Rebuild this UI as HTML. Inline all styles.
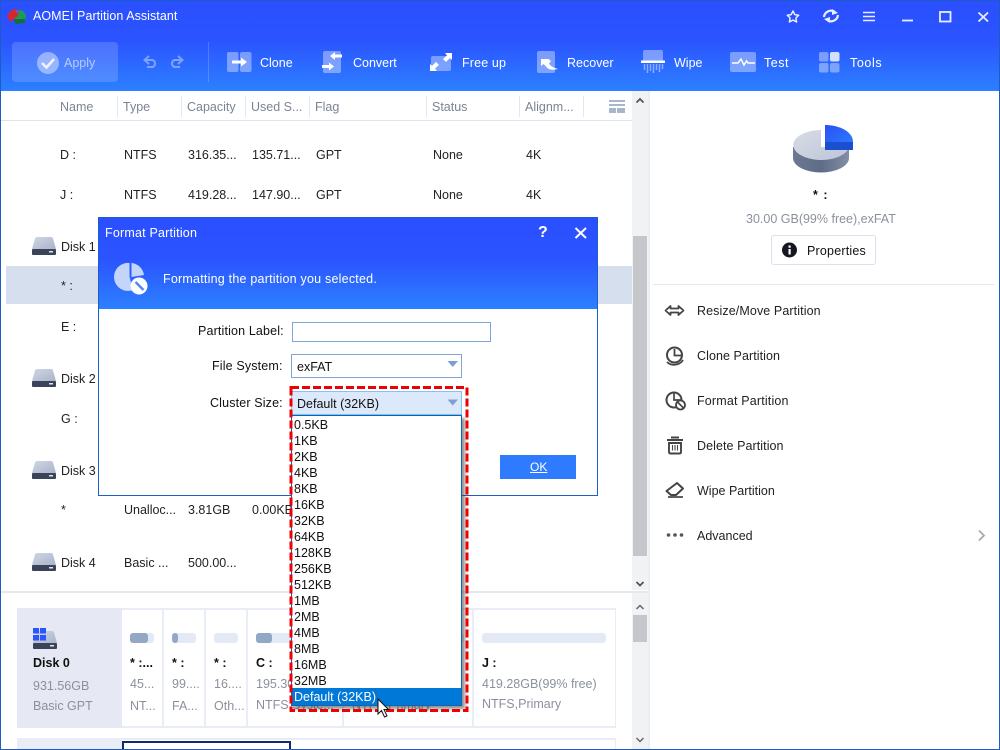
<!DOCTYPE html>
<html><head><meta charset="utf-8"><style>
html,body{margin:0;padding:0;width:1000px;height:750px;overflow:hidden;background:#fff}
body{position:relative;font-family:"Liberation Sans",sans-serif;font-size:12.5px;color:#222}
.t{position:absolute;line-height:16px;height:16px;white-space:nowrap}
.b{position:absolute}
.w{color:#fff}
.h{color:#7b8494}
.g{color:#8b919c}
.k{font-weight:bold;color:#111}
svg{position:absolute;left:0;top:0}
.dd{position:absolute;left:291px;top:415px;width:169px;height:289px;background:#fff;border:1px solid #0a66b4;box-shadow:3px 3px 3px rgba(60,60,60,.55)}
.dd div{height:16px;line-height:18px;padding-left:2px;color:#111}
.dd .s{background:#0078d7;color:#fff;height:17px}
</style></head><body>
<div class="b" style="left:0;top:0;width:1000px;height:91px;background:linear-gradient(#2b4fff 0%,#2b54ff 45%,#2c80ff 100%)"></div>
<div class="b" style="left:0;top:0;width:1000px;height:1px;background:#1c5cc4"></div>
<div class="b" style="left:12px;top:42px;width:106px;height:40px;border-radius:4px;background:rgba(255,255,255,.16)"></div>
<div class="b" style="left:208px;top:42px;width:1px;height:40px;background:rgba(255,255,255,.18)"></div>

<div class="t w" style="left:33px;top:8px;letter-spacing:.05px">AOMEI Partition Assistant</div>
<div class="t" style="left:64px;top:55px;color:#b8ccff">Apply</div>
<div class="t w" style="left:260px;top:55px">Clone</div>
<div class="t w" style="left:353px;top:55px">Convert</div>
<div class="t w" style="left:462px;top:55px;letter-spacing:.15px">Free up</div>
<div class="t w" style="left:567px;top:55px">Recover</div>
<div class="t w" style="left:674px;top:55px">Wipe</div>
<div class="t w" style="left:764px;top:55px;letter-spacing:.5px">Test</div>
<div class="t w" style="left:850px;top:55px;letter-spacing:.6px">Tools</div>

<div class="t h" style="left:60px;top:99px">Name</div>
<div class="t h" style="left:123px;top:99px">Type</div>
<div class="t h" style="left:187px;top:99px">Capacity</div>
<div class="t h" style="left:251px;top:99px">Used S...</div>
<div class="t h" style="left:315px;top:99px">Flag</div>
<div class="t h" style="left:432px;top:99px">Status</div>
<div class="t h" style="left:525px;top:99px">Alignm...</div>
<div class="b" style="left:1px;top:120px;width:631px;height:1px;background:#dde4ef"></div>
<div class="b" style="left:117px;top:96px;width:1px;height:21px;background:#e3e7ef"></div>
<div class="b" style="left:181px;top:96px;width:1px;height:21px;background:#e3e7ef"></div>
<div class="b" style="left:245px;top:96px;width:1px;height:21px;background:#e3e7ef"></div>
<div class="b" style="left:309px;top:96px;width:1px;height:21px;background:#e3e7ef"></div>
<div class="b" style="left:426px;top:96px;width:1px;height:21px;background:#e3e7ef"></div>
<div class="b" style="left:519px;top:96px;width:1px;height:21px;background:#e3e7ef"></div>
<div class="b" style="left:583px;top:96px;width:1px;height:21px;background:#e3e7ef"></div>

<div class="b" style="left:6px;top:266px;width:626px;height:38px;background:#d5dfee"></div>

<div class="t" style="left:60px;top:147px">D :</div><div class="t" style="left:124px;top:147px">NTFS</div><div class="t" style="left:188px;top:147px">316.35...</div><div class="t" style="left:252px;top:147px">135.71...</div><div class="t" style="left:316px;top:147px">GPT</div><div class="t" style="left:433px;top:147px">None</div><div class="t" style="left:526px;top:147px">4K</div>
<div class="t" style="left:60px;top:187px">J :</div><div class="t" style="left:124px;top:187px">NTFS</div><div class="t" style="left:188px;top:187px">419.28...</div><div class="t" style="left:252px;top:187px">147.90...</div><div class="t" style="left:316px;top:187px">GPT</div><div class="t" style="left:433px;top:187px">None</div><div class="t" style="left:526px;top:187px">4K</div>
<div class="t" style="left:61px;top:239px">Disk 1</div>
<div class="t" style="left:61px;top:278px">* :</div>
<div class="t" style="left:61px;top:319px">E :</div>
<div class="t" style="left:61px;top:371px">Disk 2</div>
<div class="t" style="left:61px;top:411px">G :</div>
<div class="t" style="left:61px;top:463px">Disk 3</div>
<div class="t" style="left:61px;top:502px">*</div><div class="t" style="left:124px;top:502px">Unalloc...</div><div class="t" style="left:188px;top:502px">3.81GB</div><div class="t" style="left:252px;top:502px">0.00KB</div>
<div class="t" style="left:61px;top:555px">Disk 4</div><div class="t" style="left:124px;top:555px">Basic ...</div><div class="t" style="left:188px;top:555px">500.00...</div>

<div class="b" style="left:632px;top:91px;width:16px;height:499px;background:#f1f2f4"></div>
<div class="b" style="left:633px;top:236px;width:14px;height:320px;background:#c4c6c9"></div>
<div class="b" style="left:648px;top:91px;width:2px;height:659px;background:#e9edf4"></div>
<div class="b" style="left:1px;top:591px;width:647px;height:2px;background:#e3e9f3"></div>
<div class="b" style="left:632px;top:593px;width:16px;height:157px;background:#f1f2f4"></div>
<div class="b" style="left:633px;top:615px;width:14px;height:27px;background:#c4c6c9"></div>

<div class="b" style="left:17px;top:608px;width:599px;height:120px;background:#e9edf5"></div>
<div class="b" style="left:17px;top:608px;width:105px;height:120px;background:#e6e9f3"></div>
<div class="b" style="left:122px;top:610px;width:40px;height:116px;background:#fff"></div>
<div class="b" style="left:164px;top:610px;width:40px;height:116px;background:#fff"></div>
<div class="b" style="left:206px;top:610px;width:40px;height:116px;background:#fff"></div>
<div class="b" style="left:248px;top:610px;width:94px;height:116px;background:#fff"></div>
<div class="b" style="left:344px;top:610px;width:128px;height:116px;background:#fff"></div>
<div class="b" style="left:474px;top:610px;width:141px;height:116px;background:#fff"></div>
<div class="b" style="left:130px;top:633px;width:24px;height:10px;border-radius:3px;background:#e3e9f5"></div><div class="b" style="left:130px;top:633px;width:18px;height:10px;border-radius:3px;background:#93a8c6"></div>
<div class="b" style="left:172px;top:633px;width:24px;height:10px;border-radius:3px;background:#e3e9f5"></div><div class="b" style="left:172px;top:633px;width:6px;height:10px;border-radius:3px;background:#93a8c6"></div>
<div class="b" style="left:214px;top:633px;width:24px;height:10px;border-radius:3px;background:#e3e9f5"></div>
<div class="b" style="left:256px;top:633px;width:78px;height:10px;border-radius:3px;background:#e3e9f5"></div><div class="b" style="left:256px;top:633px;width:16px;height:10px;border-radius:3px;background:#93a8c6"></div>
<div class="b" style="left:352px;top:633px;width:112px;height:10px;border-radius:3px;background:#e3e9f5"></div>
<div class="b" style="left:482px;top:633px;width:124px;height:10px;border-radius:3px;background:#e3e9f5"></div>
<div class="t k" style="left:33px;top:655px">Disk 0</div>
<div class="t g" style="left:33px;top:678px">931.56GB</div>
<div class="t g" style="left:33px;top:698px">Basic GPT</div>
<div class="t k" style="left:130px;top:655px">* :...</div><div class="t g" style="left:130px;top:676px">45...</div><div class="t g" style="left:130px;top:698px">NT...</div>
<div class="t k" style="left:172px;top:655px">* :</div><div class="t g" style="left:172px;top:676px">99....</div><div class="t g" style="left:172px;top:698px">FA...</div>
<div class="t k" style="left:214px;top:655px">* :</div><div class="t g" style="left:214px;top:676px">16....</div><div class="t g" style="left:214px;top:698px">Oth...</div>
<div class="t k" style="left:256px;top:655px">C :</div><div class="t g" style="left:256px;top:676px">195.30GB</div><div class="t g" style="left:256px;top:697px">NTFS,Syste...</div>
<div class="t g" style="left:352px;top:697px">NTFS,Primary</div>
<div class="t k" style="left:482px;top:655px">J :</div><div class="t g" style="left:482px;top:676px">419.28GB(99% free)</div><div class="t g" style="left:482px;top:696px">NTFS,Primary</div>
<div class="b" style="left:17px;top:738px;width:599px;height:12px;background:#e9edf5"></div>
<div class="b" style="left:122px;top:740px;width:493px;height:10px;background:#fff"></div>
<div class="b" style="left:122px;top:741px;width:165px;height:9px;border:2px solid #14286e;border-bottom:0;background:#fff"></div>

<div class="t k" style="left:813px;top:187px;width:20px;letter-spacing:1px">* :</div>
<div class="t g" style="left:746px;top:211px">30.00 GB(99% free),exFAT</div>
<div class="b" style="left:771px;top:235px;width:103px;height:28px;border:1px solid #dbe2ee;border-radius:3px"></div>
<div class="t" style="left:807px;top:243px;color:#111;letter-spacing:.2px">Properties</div>
<div class="b" style="left:653px;top:284px;width:341px;height:1px;background:#e1e7f3"></div>
<div class="t" style="left:697px;top:303px;letter-spacing:.1px">Resize/Move Partition</div>
<div class="t" style="left:697px;top:348px;letter-spacing:.07px">Clone Partition</div>
<div class="t" style="left:697px;top:393px;letter-spacing:.17px">Format Partition</div>
<div class="t" style="left:697px;top:438px;letter-spacing:.07px">Delete Partition</div>
<div class="t" style="left:697px;top:483px">Wipe Partition</div>
<div class="t" style="left:697px;top:528px">Advanced</div>

<div class="b" style="left:0;top:0;width:1px;height:750px;background:#1c5cc4"></div>
<div class="b" style="left:999px;top:0;width:1px;height:750px;background:#1c5cc4"></div>
<div class="b" style="left:0;top:749px;width:1000px;height:1px;background:#1c5cc4"></div>

<svg width="1000" height="750" viewBox="0 0 1000 750" fill="none">
<defs>
<linearGradient id="disk" x1="0" y1="0" x2="1" y2="1"><stop offset="0" stop-color="#cfd6e6"/><stop offset="1" stop-color="#aab4c9"/></linearGradient>
<linearGradient id="pie" x1="0" y1="0" x2="1" y2="1"><stop offset="0" stop-color="#d8dce6"/><stop offset="1" stop-color="#bcc5d8"/></linearGradient>
<linearGradient id="side" x1="0" y1="0" x2="1" y2="0"><stop offset="0" stop-color="#6c7892"/><stop offset=".5" stop-color="#5f6c88"/><stop offset="1" stop-color="#838ea6"/></linearGradient>
<linearGradient id="blue" x1="0" y1="0" x2="1" y2="1"><stop offset="0" stop-color="#2b50f5"/><stop offset="1" stop-color="#2a80ff"/></linearGradient>
</defs>
<!-- logo -->
<path d="M8 19 C7 13 11 9 16 9 L20 10 L18 17 L13 19 L12 22 Z" fill="#d7262c"/>
<path d="M19 10 C23 10 26 13 26 17 L25 20 L14 19 L18 16 Z" fill="#1e9c55"/>
<path d="M14 19 L25 19 L25 23 L15 24 Z" fill="#156f3c"/>
<path d="M15 10 L19 10 L17 14 Z" fill="#3a6fe0"/>
<!-- window controls -->
<path d="M793 11 L794.8 14.6 L798.7 15.2 L795.9 18 L796.6 22 L793 20.1 L789.4 22 L790.1 18 L787.3 15.2 L791.2 14.6 Z" stroke="#e8eeff" stroke-width="1.5" stroke-linejoin="round"/>
<path d="M824 17 A7 7 0 0 1 835 12 M838 15 A7 7 0 0 1 827 20" stroke="#e8eeff" stroke-width="2.2"/>
<path d="M832 9 L838 13 L832 15 Z M830 23 L824 19 L830 17 Z" fill="#e8eeff"/>
<path d="M863 12.5 H875 M863 16.5 H875 M863 20.5 H875" stroke="#e8eeff" stroke-width="1.6"/>
<path d="M902 20.5 H913" stroke="#e8eeff" stroke-width="1.8"/>
<rect x="940" y="12" width="10.5" height="9.5" stroke="#e8eeff" stroke-width="1.8"/>
<path d="M978.5 12.5 L988 21.5 M988 12.5 L978.5 21.5" stroke="#e8eeff" stroke-width="1.8"/>
<!-- apply -->
<circle cx="48" cy="63" r="11" fill="#fff" fill-opacity=".42"/>
<path d="M42 63 L46.5 67.5 L54 59" stroke="#eef3ff" stroke-width="2.6"/>
<path d="M145 60 H152.500 A3.700 3.700 0 0 1 152.500 67 H147 M149 56 L144.500 60 L149 64" stroke="#7fa2ff" stroke-width="2"/>
<path d="M182 60 H174.500 A3.700 3.700 0 0 0 174.500 67 H180 M178 56 L182.500 60 L178 64" stroke="#7fa2ff" stroke-width="2"/>
<!-- clone -->
<rect x="227" y="52" width="11.5" height="20" rx="2" fill="#fff" fill-opacity=".38"/>
<rect x="240" y="52" width="11.5" height="20" rx="2" fill="#fff" fill-opacity=".38"/>
<path d="M232 60.5 H241 V57.5 L247 62 L241 66.5 V63.5 H232 Z" fill="#fff"/>
<!-- convert -->
<rect x="323" y="51" width="18" height="22" rx="2" fill="#fff" fill-opacity=".38"/>
<path d="M342 54.5 H335 V52 L330 56 L335 60 V57.5 H342 Z M322 65 H329 V62.5 L334 66.5 L329 70.5 V68 H322 Z" fill="#fff"/>
<!-- free up -->
<rect x="431" y="56" width="20" height="15" rx="2" fill="#fff" fill-opacity=".38"/>
<path d="M452 53 L445 53 L447 55.5 L443 59 L446 62 L450 58 L452 60 Z M430 71 L437 71 L435 68.5 L439 65 L436 62 L432 66 L430 64 Z" fill="#fff"/>
<!-- recover -->
<rect x="537" y="51" width="18" height="22" rx="2" fill="#fff" fill-opacity=".38"/>
<path d="M541 59 V66 L543.5 64 L546 66.5 C548 69.5 552 70.5 558 69 C555 68 551 67 549 63.5 L551 61 L548.500 59 Z" fill="#fff"/>
<!-- wipe -->
<path d="M643 52 a2 2 0 0 1 2-2 h16 a2 2 0 0 1 2 2 v9 h-20 Z" fill="#fff" fill-opacity=".38"/>
<rect x="641" y="60.500" width="24" height="2.500" fill="#fff"/>
<path d="M644.500 64 V70 M647.500 64 V73 M650.500 64 V71 M653.500 64 V73 M656.500 64 V70 M659.500 64 V72 M662.500 64 V69" stroke="#fff" stroke-opacity=".45" stroke-width="1.500"/>
<!-- test -->
<rect x="730" y="52" width="26" height="20" rx="2" fill="#fff" fill-opacity=".38"/>
<path d="M732 63 H738 L741 59 L744 65 L746.500 61 L748 63 H755" stroke="#fff" stroke-width="1.500"/>
<!-- tools -->
<rect x="819" y="52" width="9.500" height="9.500" rx="2" fill="#fff" fill-opacity=".38"/>
<rect x="830" y="52" width="9.500" height="9.500" rx="2" fill="#fff" fill-opacity=".8"/>
<rect x="819" y="63" width="9.500" height="9.500" rx="2" fill="#fff" fill-opacity=".38"/>
<rect x="830" y="63" width="9.500" height="9.500" rx="2" fill="#fff" fill-opacity=".38"/>
<!-- column icon -->
<rect x="609" y="100" width="16" height="2" fill="#a9b6c8"/><rect x="609" y="104" width="16" height="2" fill="#a9b6c8"/><rect x="609" y="108" width="7" height="5" fill="#a9b6c8"/><rect x="617" y="108" width="8" height="5" fill="#a9b6c8"/>
<!-- scroll arrows -->
<path d="M636.500 102.500 L640 99 L643.500 102.500" stroke="#555" stroke-width="1.800"/>
<path d="M636.500 582 L640 585.500 L643.500 582" stroke="#555" stroke-width="1.800"/>
<path d="M636.500 609 L640 605.500 L643.500 609" stroke="#666" stroke-width="1.500"/>
<path d="M636.500 738 L640 741.500 L643.500 738" stroke="#666" stroke-width="1.500"/>
<!-- disks -->
<g id="d1"><path d="M37 237 H51 Q52.500 237 53 238.500 L56 249 H32 L35 238.500 Q35.500 237 37 237 Z" fill="url(#disk)"/><rect x="32" y="249" width="24" height="6" rx="1" fill="#3a4358"/><rect x="49" y="251" width="4" height="1.500" fill="#dfe6f5"/></g>
<use href="#d1" y="132"/><use href="#d1" y="224"/><use href="#d1" y="316"/>
<use href="#d1" y="394" x="1"/>
<rect x="33" y="628" width="6" height="5.500" fill="#2b55ff"/><rect x="40" y="628" width="6" height="5.500" fill="#2b55ff"/><rect x="33" y="635" width="6" height="5.500" fill="#2b55ff"/><rect x="40" y="635" width="6" height="5.500" fill="#2b55ff"/>
<!-- pie -->
<path d="M793 147 V158 A28 14.500 0 0 0 849 158 V147 Z" fill="url(#side)"/>
<path d="M821 130 A28 15 0 1 0 849 147 H821 Z" fill="url(#pie)"/>
<path d="M825 125 C840 125 853 132 853 142 V150 H825 Z" fill="url(#blue)"/>
<path d="M825 142 H853 V150 H825 Z" fill="#1c4fd0"/>
<!-- properties icon -->
<circle cx="789.500" cy="250" r="7.500" fill="#14171f"/>
<rect x="788.500" y="249" width="2.200" height="5.500" fill="#fff"/><rect x="788.500" y="245.500" width="2.200" height="2.200" fill="#fff"/>
<!-- action icons -->
<path d="M665.500 310.500 L670.500 306 V308.500 H678.500 V306 L683.500 310.500 L678.500 315 V312.500 H670.500 V315 Z" stroke="#444" stroke-width="1.800" stroke-linejoin="round"/>
<circle cx="674.500" cy="355" r="7.500" stroke="#444" stroke-width="2"/><path d="M674.500 349 V355.500 H681" stroke="#444" stroke-width="1.800"/><path d="M667 362 C671 366 679 366 683 360" stroke="#444" stroke-width="1.800"/>
<circle cx="674" cy="400" r="7.500" stroke="#444" stroke-width="2"/><path d="M674 393 V400 H681" stroke="#444" stroke-width="1.700"/><circle cx="680.500" cy="405" r="4.500" fill="#fff" stroke="#444" stroke-width="1.800"/><path d="M677.500 402 L683.500 408" stroke="#444" stroke-width="1.600"/>
<path d="M667 440 H683 M671 437.500 H679" stroke="#444" stroke-width="2"/><path d="M669 443 H681 V452 Q681 453.500 679.500 453.500 H670.500 Q669 453.500 669 452 Z" stroke="#444" stroke-width="1.900"/><path d="M672.500 445 V450.500 M675 445 V450.500 M677.500 445 V450.500" stroke="#444" stroke-width="1.100"/>
<path d="M666.500 491 L677 483 L683 488.500 L676 495 H671 Z" stroke="#444" stroke-width="2" stroke-linejoin="round"/><path d="M668 497 H683" stroke="#444" stroke-width="1.700"/>
<circle cx="668.500" cy="535" r="1.800" fill="#555"/><circle cx="675" cy="535" r="1.800" fill="#555"/><circle cx="681.500" cy="535" r="1.800" fill="#555"/>
<path d="M979 530.500 L984 535.500 L979 540.500" stroke="#aaa" stroke-width="1.800"/>
</svg>

<!-- dialog -->
<div class="b" style="left:98px;top:217px;width:498px;height:277px;border:1px solid #1d5fc2;background:#fff"></div>
<div class="b" style="left:99px;top:218px;width:498px;height:91px;background:linear-gradient(#2b4fff 0%,#2b54ff 45%,#2c80ff 100%)"></div>
<div class="t w" style="left:105px;top:225px;letter-spacing:.2px">Format Partition</div>
<div class="t w" style="left:163px;top:271px;letter-spacing:.22px">Formatting the partition you selected.</div>
<div class="t w" style="left:538px;top:225px;font-size:16px;font-weight:bold">?</div>
<div class="t" style="left:198px;top:323px;color:#111;letter-spacing:.15px">Partition Label:</div>
<div class="t" style="left:212px;top:358px;color:#111;letter-spacing:.15px">File System:</div>
<div class="t" style="left:210px;top:395px;color:#111;letter-spacing:.15px">Cluster Size:</div>
<div class="b" style="left:292px;top:322px;width:197px;height:18px;border:1px solid #7ea6dc;background:#fff"></div>
<div class="b" style="left:291px;top:354px;width:169px;height:22px;border:1px solid #7ea6dc;background:#fff"></div>
<div class="t" style="left:297px;top:358px;color:#111;line-height:18px">exFAT</div>
<div class="b" style="left:291px;top:391px;width:169px;height:22px;border:1px solid #7cc4f5;background:#dce9fb"></div>
<div class="t" style="left:297px;top:395px;color:#111;line-height:18px">Default (32KB)</div>
<div class="b" style="left:500px;top:455px;width:76px;height:24px;background:#2f7bff"></div>
<div class="t w" style="left:530px;top:459px;text-decoration:underline;font-size:12px">OK</div>

<div class="dd">
<div>0.5KB</div><div>1KB</div><div>2KB</div><div>4KB</div><div>8KB</div><div>16KB</div><div>32KB</div><div>64KB</div><div>128KB</div><div>256KB</div><div>512KB</div><div>1MB</div><div>2MB</div><div>4MB</div><div>8MB</div><div>16MB</div><div>32MB</div><div class="s">Default (32KB)</div>
</div>

<svg width="1000" height="750" viewBox="0 0 1000 750" fill="none">
<path d="M575.500 228 L586 238 M586 228 L575.500 238" stroke="#fff" stroke-width="2"/>
<path d="M129.500 263 A14 14 0 1 0 133 290 L129.500 277 Z" fill="#c3d5fb"/>
<path d="M131.500 263 A14 14 0 0 1 144 275 L131.500 277 Z" fill="#c3d5fb"/>
<circle cx="139" cy="286" r="8.500" fill="#fff"/>
<path d="M135.500 282 L143.500 290" stroke="#4f86f5" stroke-width="2.400"/>
<path d="M447.500 361 H458 L452.700 367 Z" fill="#7d9fd2"/>
<path d="M447.500 399.500 H458 L452.700 405.500 Z" fill="#7d9fd2"/>
<rect x="291" y="387.500" width="176" height="323" stroke="#f00000" stroke-width="3" stroke-dasharray="8 3"/>
<path d="M378 699 V714 L381.500 710.500 L384.500 717 L387 716 L384 709.500 L388.500 709.500 Z" fill="#fff" stroke="#111" stroke-width="1"/>
</svg>
</body></html>
